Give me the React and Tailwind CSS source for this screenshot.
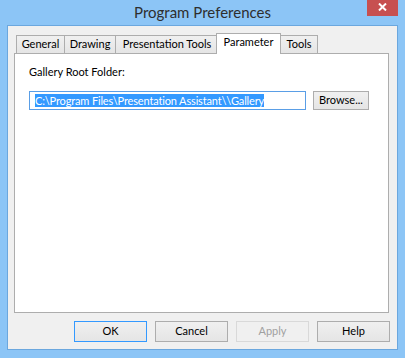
import React from "react";

const tabs = [
  { label: "General", width: "w-[49px]", first: true },
  { label: "Drawing", width: "w-[52px]" },
  { label: "Presentation Tools", width: "w-[104px]" },
  { label: "Parameter", width: "w-[65px]", active: true },
  { label: "Tools", width: "w-[38px]" },
];

function Tab({ label, width, active, first }) {
  if (active) {
    return (
      <div
        className={`${width} -ml-[3px] -mb-px h-[21px] relative z-10 flex items-center justify-center pb-[3px] bg-white border border-b-0 border-[#adadad]`}
      >
        {label}
      </div>
    );
  }
  return (
    <div
      className={`${width} ${first ? "" : "-ml-px"} h-[18px] flex items-center justify-center bg-gradient-to-b from-[#f0f0f0] to-[#e5e5e5] border border-b-0 border-[#adadad]`}
    >
      {label}
    </div>
  );
}

function Button({ children, primary, disabled }) {
  return (
    <button
      className={
        "w-[73px] h-[21px] border flex items-center justify-center " +
        (disabled
          ? "border-[#d9d9d9] bg-[#f0f0f0] text-[#a0a0a0]"
          : primary
          ? "border-[#3399ff] bg-gradient-to-b from-[#f0f0f0] to-[#e5e5e5] text-black"
          : "border-[#adadad] bg-gradient-to-b from-[#f0f0f0] to-[#e5e5e5] text-black")
      }
    >
      {children}
    </button>
  );
}

export default function App() {
  return (
    <div className="w-[405px] h-[358px] bg-[#8cc5f6] flex flex-col px-[7px] pb-[8px] font-['Lato','Noto_Sans',sans-serif] text-[11px] text-black">
      <div className="h-[25px] shrink-0 grid grid-cols-[1fr_auto_1fr] -mx-[7px]">
        <div />
        <div className="text-[15px] leading-[25px] text-[#2e2e2e]">Program Preferences</div>
        <div className="flex justify-end items-start pr-[7px]">
          <div className="w-[31px] h-[16px] bg-[#c75050] flex items-center justify-center pb-[2px]">
            <svg width="9" height="8" viewBox="0 0 9 8">
              <path d="M1 0.5 L8 7.5 M8 0.5 L1 7.5" stroke="white" strokeWidth="2" />
            </svg>
          </div>
        </div>
      </div>

      <div className="flex-1 flex flex-col border border-[#6ba7de] bg-[#f0f0f0] pl-[6px] pr-[8px] pt-[7px] pb-[7px]">
        <div className="h-[20px] flex items-end pl-[2px]">
          {tabs.map((t) => (
            <Tab key={t.label} {...t} />
          ))}
        </div>

        <div className="h-[260px] border border-[#adadad] bg-white pl-[14px] pt-[10px]">
          <div className="leading-[16px]">Gallery Root Folder:</div>
          <div className="mt-[11px] flex gap-[7px]">
            <div className="w-[277px] h-[19px] border border-[#5a9ee6] bg-white flex items-center pl-[5px]">
              <span className="bg-[#3399ff] text-white leading-[13px] whitespace-nowrap tracking-[-0.15px]">
                C:\Program Files\Presentation Assistant\\Gallery
              </span>
            </div>
            <button className="w-[56px] h-[19px] border border-[#adadad] bg-gradient-to-b from-[#f0f0f0] to-[#e5e5e5] flex items-center justify-center">
              Browse...
            </button>
          </div>
        </div>

        <div className="mt-[8px] flex justify-end gap-[8px] -mr-px">
          <Button primary>OK</Button>
          <Button>Cancel</Button>
          <Button disabled>Apply</Button>
          <Button>Help</Button>
        </div>
      </div>
    </div>
  );
}
